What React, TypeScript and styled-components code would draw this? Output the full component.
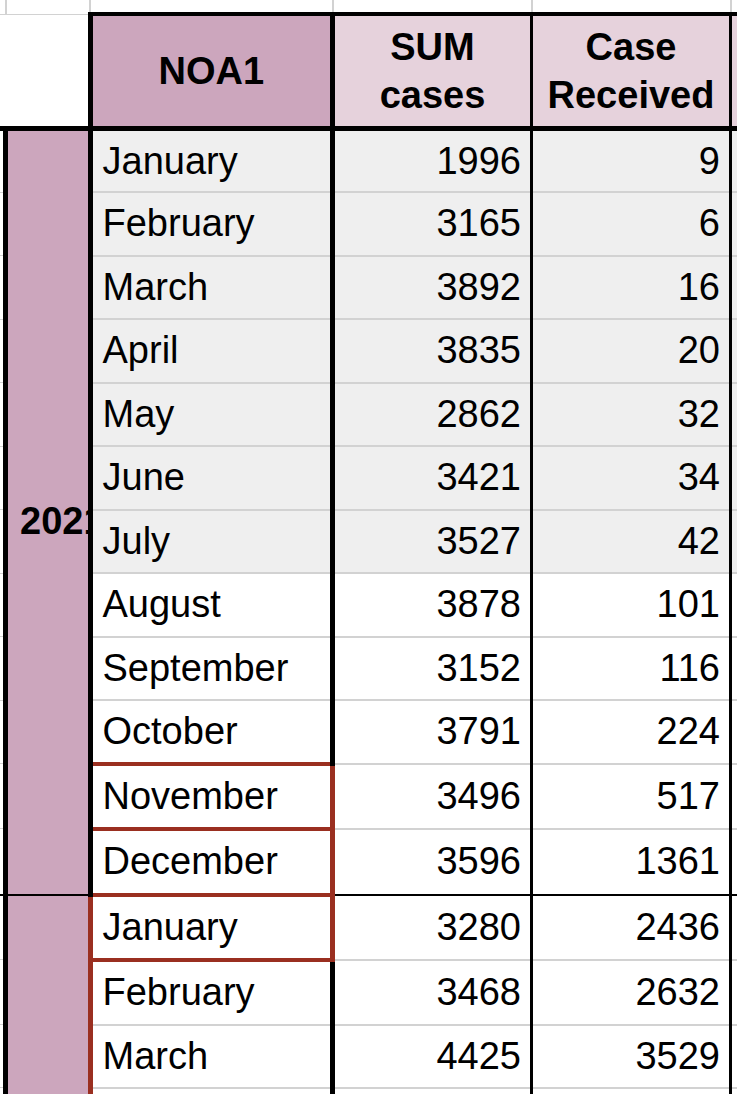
import * as React from "react";
import styled, {createGlobalStyle, css} from "styled-components";

const INK = "#000000";
const GRID = "#d2d2d2";
const RED = "#9a2f20";
const PINK = "#cca6bd";
const PINK_LIGHT = "#e6d2dc";
const SHADE = "#efefef";

type Line = "grid" | "ink" | "red" | "none";

const edge = (l: Line, w: number) => {
    if (l === "none") return "none";
    const c = l === "grid" ? GRID : l === "ink" ? INK : RED;
    return `${w}px solid ${c}`;
};

const GlobalStyle = createGlobalStyle`
  html, body {
    margin: 0;
    padding: 0;
    background: #ffffff;
    overflow: hidden;
  }

  body {
    font-family: "Liberation Sans", Arial, sans-serif;
  }
`

const Sheet = styled.table`
  border-collapse: collapse;
  table-layout: fixed;
  width: 930px;
  color: #000;
  font-family: "Liberation Sans", Arial, sans-serif;
  font-size: 38px;
`

const Col = styled.col<{ $w: number }>`
  width: ${({$w}) => $w}px;
`

const Row = styled.tr<{ $h: number }>`
  height: ${({$h}) => $h}px;
`

// partly visible column left of the year column
const EdgeCell = styled.td<{ $bottom: Line; $bw?: number }>`
  padding: 0;
  border-bottom: ${({$bottom, $bw}) => edge($bottom, $bw ?? 2)};
`

const TopCell = styled.td`
  padding: 0;
  border-right: ${edge("grid", 2)};
  border-bottom: ${edge("grid", 1)};
`

const CornerCell = styled.td`
  padding: 0;
  background: #fff;
  border-bottom: ${edge("ink", 5)};
`

const HeaderCell = styled.td<{ $tone: "dark" | "light"; $left?: boolean; $rw: number }>`
  padding: 0;
  background: ${({$tone}) => $tone === "dark" ? PINK : PINK_LIGHT};
  border-top: ${edge("ink", 4)};
  border-bottom: ${edge("ink", 5)};
  border-right: ${({$rw}) => edge("ink", $rw)};
  ${({$left}) => $left && css`border-left: ${edge("ink", 5)};`}
  font-weight: bold;
  line-height: 48px;
  text-align: center;
  vertical-align: middle;
  overflow: hidden;
`

const YearCell = styled.td<{ $right: Line; $bottom: Line }>`
  padding: 0;
  background: ${PINK};
  border-left: ${edge("ink", 5)};
  border-right: ${({$right}) => edge($right, 5)};
  border-bottom: ${({$bottom}) => edge($bottom, 2)};
  vertical-align: middle;
  overflow: hidden;
`

const YearLabel = styled.div`
  padding: 18px 0 0 12px;
  font-weight: bold;
  white-space: nowrap;
  overflow: hidden;
`

const MonthCell = styled.td<{ $shade: boolean; $top: Line; $bottom: Line; $right: Line }>`
  padding: 0 9px 0 10px;
  background: ${({$shade}) => $shade ? SHADE : "#fff"};
  border-top: ${({$top}) => edge($top, 4)};
  border-bottom: ${({$bottom}) => edge($bottom, $bottom === "red" ? 4 : 2)};
  border-right: ${({$right}) => edge($right, 5)};
  white-space: nowrap;
  vertical-align: middle;
`

const NumCell = styled.td<{ $shade: boolean; $bottom: Line; $rw: number }>`
  padding: 0 9px 0 0;
  background: ${({$shade}) => $shade ? SHADE : "#fff"};
  border-bottom: ${({$bottom}) => edge($bottom, 2)};
  border-right: ${({$rw}) => $rw ? edge("ink", $rw) : "none"};
  text-align: right;
  white-space: nowrap;
  vertical-align: middle;
`

type Entry = { month: string; sum?: number; received?: number };

const y2021: Entry[] = [
    {month: "January", sum: 1996, received: 9},
    {month: "February", sum: 3165, received: 6},
    {month: "March", sum: 3892, received: 16},
    {month: "April", sum: 3835, received: 20},
    {month: "May", sum: 2862, received: 32},
    {month: "June", sum: 3421, received: 34},
    {month: "July", sum: 3527, received: 42},
    {month: "August", sum: 3878, received: 101},
    {month: "September", sum: 3152, received: 116},
    {month: "October", sum: 3791, received: 224},
    {month: "November", sum: 3496, received: 517},
    {month: "December", sum: 3596, received: 1361},
];

const y2022: Entry[] = [
    {month: "January", sum: 3280, received: 2436},
    {month: "February", sum: 3468, received: 2632},
    {month: "March", sum: 4425, received: 3529},
    {month: ""},
];

const heights = [63.5, 63.5, 63.5, 63.5, 63.5, 63.5, 63.5, 63.5, 63.5, 63.5, 65, 66, 65, 65, 63, 63];

// rows that sit inside the red outline on the NOA1 column
const boxed = new Set([10, 11, 12]);

const DataRow: React.FC<{ index: number; entry: Entry; year?: { label: string; span: number; right: Line; bottom: Line } }> = ({index, entry, year}) => {
    const shade = index < 7;
    const inBox = boxed.has(index);
    const rowBottom: Line = index === 11 ? "ink" : "grid";
    const monthBottom: Line = inBox ? "red" : "grid";
    const monthTop: Line = index === 10 ? "red" : "none";
    return <Row $h={heights[index]}>
        <EdgeCell $bottom={index === 11 ? "ink" : "grid"} $bw={index === 11 ? 2 : 1}/>
        {year && <YearCell rowSpan={year.span} $right={year.right} $bottom={year.bottom}>
            <YearLabel>{year.label}</YearLabel>
        </YearCell>}
        <MonthCell $shade={shade} $top={monthTop} $bottom={monthBottom} $right={inBox ? "red" : "ink"}>
            {entry.month}
        </MonthCell>
        <NumCell $shade={shade} $bottom={rowBottom} $rw={3}>{entry.sum ?? ""}</NumCell>
        <NumCell $shade={shade} $bottom={rowBottom} $rw={3}>{entry.received ?? ""}</NumCell>
        <NumCell $shade={shade} $bottom={rowBottom} $rw={0}/>
    </Row>
}

export default function App() {
    return <>
        <GlobalStyle/>
        <Sheet>
            <colgroup>
                <Col $w={5.5}/>
                <Col $w={84.5}/>
                <Col $w={242.5}/>
                <Col $w={199}/>
                <Col $w={199}/>
                <Col $w={199.5}/>
            </colgroup>
            <tbody>
            <Row $h={14}>
                <TopCell/>
                <TopCell/>
                <TopCell/>
                <TopCell/>
                <TopCell/>
                <TopCell/>
            </Row>
            <Row $h={114.5}>
                <CornerCell/>
                <CornerCell/>
                <HeaderCell $tone="dark" $left $rw={5}>NOA1</HeaderCell>
                <HeaderCell $tone="light" $rw={3}>SUM<br/>cases</HeaderCell>
                <HeaderCell $tone="light" $rw={3}>Case<br/>Received</HeaderCell>
                <HeaderCell $tone="light" $rw={0}/>
            </Row>
            {y2021.map((entry, i) => <DataRow key={"a" + i} index={i} entry={entry}
                                              year={i === 0 ? {label: "2021", span: y2021.length, right: "ink", bottom: "ink"} : undefined}/>)}
            {y2022.map((entry, i) => <DataRow key={"b" + i} index={12 + i} entry={entry}
                                              year={i === 0 ? {label: "", span: y2022.length, right: "red", bottom: "grid"} : undefined}/>)}
            </tbody>
        </Sheet>
    </>
}
